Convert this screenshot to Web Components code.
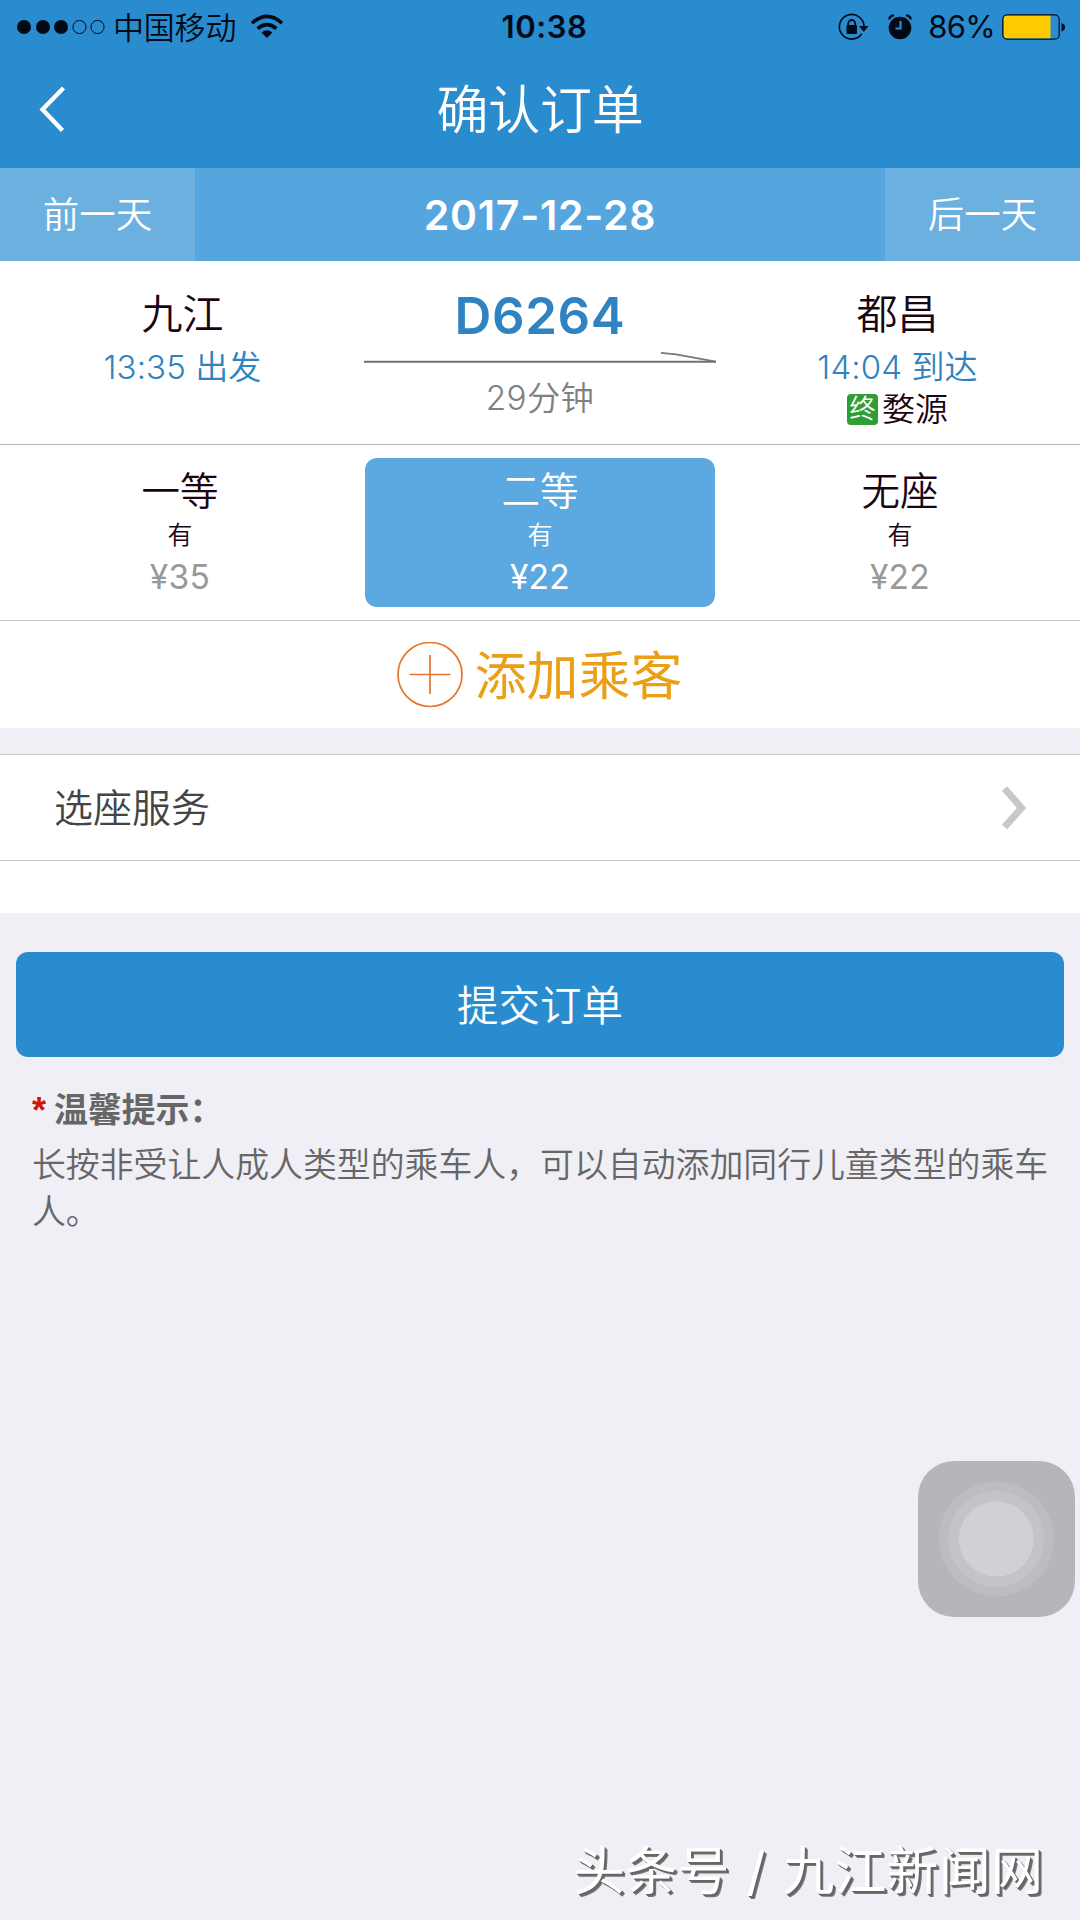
<!DOCTYPE html>
<html lang="zh-CN">
<head>
<meta charset="utf-8">
<title>确认订单</title>
<style>
html, body { margin: 0; padding: 0; }
body {
  width: 1080px; height: 1920px; overflow: hidden; background: #efeff5;
  font-family: Inter, "Noto Sans CJK SC", sans-serif; font-weight: 400;
}
</style>
</head>
<body>
<order-page></order-page>

<script>
const define = (name, html) => {
  const tpl = document.createElement('template');
  tpl.innerHTML = html;
  customElements.define(name, class extends HTMLElement {
    constructor() {
      super();
      this.attachShadow({ mode: 'open' }).append(tpl.content.cloneNode(true));
    }
  });
};

define('status-bar', `
<style>
:host { display: grid; grid-template-columns: 1fr auto 1fr; align-items: center; height: 53px; color: #020a18; }
.left, .right { display: flex; align-items: center; }
.left { padding-left: 17px; }
.right { justify-content: flex-end; padding-right: 15px; }
.dots { width: 90px; height: 16px; margin-right: 6px; }
.carrier { font-size: 31px; line-height: 53px; letter-spacing: -.2px; font-weight: 350; }
.wifi { width: 34px; height: 25px; margin-left: 14px; margin-top: -2px; }
.time { font-size: 31px; line-height: 54px; font-weight: 600; padding-left: 9px; letter-spacing: .6px; }
.lock { width: 32px; height: 30px; margin-right: 18px; }
.alarm { width: 26px; height: 28px; margin-right: 15px; margin-top: -2px; }
.pct { font-size: 31px; line-height: 54px; letter-spacing: -.7px; margin-right: 7px; }
.battery { width: 63px; height: 26px; }
svg { display: block; flex: none; }
</style>
<div class="left">
  <svg class="dots" viewBox="0 0 90 16"><g fill="currentColor"><circle cx="7" cy="8" r="7"/><circle cx="26" cy="8" r="7"/><circle cx="44" cy="8" r="7"/></g><g fill="none" stroke="currentColor"><circle cx="62.500" cy="8" r="6.600"/><circle cx="80.500" cy="8" r="6.600"/></g></svg>
  <span class="carrier">中国移动</span>
  <svg class="wifi" viewBox="0 0 34 25"><g fill="none" stroke="currentColor" stroke-width="3.600"><path d="M2 9.200Q17-4.600 32 9.200"/><path d="M7.600 14.600Q17 6.600 26.400 14.600"/></g><path d="M17 24l-5.500-5.600q5.500-4.200 11 0z" fill="currentColor"/></svg>
</div>
<span class="time">10:38</span>
<div class="right">
  <svg class="lock" viewBox="0 0 32 30"><path d="M24.800 21.800A12.300 12.300 0 1 1 27 15" fill="none" stroke="currentColor" stroke-width="1.600"/><path d="M22 14h9.500l-4.700 6z" fill="currentColor"/><rect x="9.500" y="13" width="10.500" height="9" rx="1" fill="currentColor"/><path d="M11.200 14v-2.500a3.500 3.500 0 0 1 7 0V14" fill="none" stroke="currentColor" stroke-width="1.800"/></svg>
  <svg class="alarm" viewBox="0 0 26 28"><circle cx="13" cy="16" r="11.300" fill="currentColor"/><path d="M2.200 7.500Q2.500 4 7 3.200M23.800 7.500Q23.500 4 19 3.200" fill="none" stroke="currentColor" stroke-width="2.200"/><path d="M13.500 9v7.500H8.500" fill="none" stroke="#298ccf" stroke-width="2.200"/></svg>
  <span class="pct">86%</span>
  <svg class="battery" viewBox="0 0 63 26"><rect x=".8" y=".8" width="56.400" height="24.400" rx="4.500" fill="none" stroke="currentColor" stroke-width="1.200"/><path d="M4.500 1.800H48.500V24.200H4.500Q1.800 24.200 1.800 21.500V4.500Q1.800 1.800 4.500 1.800z" fill="#fecb02"/><path d="M59.500 9q3.500 1 3.500 4.200t-3.500 4.200z" fill="currentColor"/></svg>
</div>`);

define('nav-bar', `
<style>
:host { display: grid; grid-template-columns: 120px 1fr 120px; align-items: center; height: 115px; color: #fff; }
svg { width: 28px; height: 48px; margin-left: 39px; margin-top: -4px; display: block; }
h1 { margin: 0; text-align: center; font-size: 52px; line-height: 115px; font-weight: 350; letter-spacing: -.2px; }
</style>
<svg viewBox="0 0 28 48"><path d="M24.500 3L3.500 24.500L23.500 45.500" fill="none" stroke="#fff" stroke-width="4.400"/></svg>
<h1><slot></slot></h1>`);

define('date-bar', `
<style>
:host { display: grid; grid-template-columns: 195px 1fr 195px; height: 93px; line-height: 94px; overflow: hidden; color: #fff; background: #55a5df; text-align: center; }
.day { background: #6bb0df; font-size: 36.500px; font-weight: 350; }
.date { font-size: 41px; font-weight: 600; letter-spacing: .7px; }
</style>
<div class="day"><slot name="prev"></slot></div>
<div class="date"><slot></slot></div>
<div class="day"><slot name="next"></slot></div>`);

define('trip-stop', `
<style>
:host { display: flex; flex-direction: column; align-items: center; padding-top: 26px; }
.city { font-size: 41px; line-height: 54px; color: #1c0512; font-weight: 350; }
.time { font-size: 33px; line-height: 42px; margin-top: 5px; color: #2f83c0; font-weight: 350; white-space: pre; letter-spacing: .1px; }
.end { display: flex; align-items: center; font-size: 33px; line-height: 42px; color: #1c0512; font-weight: 350; }
</style>
<div class="city"><slot name="city"></slot></div>
<div class="time"><slot></slot></div>
<div class="end"><slot name="end"></slot></div>`);

define('end-badge', `
<style>
:host { display: block; width: 31px; height: 31px; margin: 1px 4px 0 0; border-radius: 4px; background: #2f9e35; color: #fff; font-size: 26px; line-height: 30px; text-align: center; font-weight: 350; }
</style><slot></slot>`);

define('trip-summary', `
<style>
:host { display: grid; grid-template-columns: 365px 350px 365px; background: #fff; border-bottom: 1px solid #b4b4ba; box-sizing: border-box; height: 184px; }
.mid { display: flex; flex-direction: column; align-items: center; padding-top: 25px; }
.train { font-size: 51px; line-height: 60px; font-weight: 600; color: #2f83c0; letter-spacing: .6px; }
svg { width: 352px; height: 14px; margin-top: 3px; display: block; }
.dur { font-size: 33.300px; line-height: 42px; color: #808080; margin-top: 14px; font-weight: 350; letter-spacing: .4px; }
</style>
<slot name="from"></slot>
<div class="mid">
  <div class="train"><slot name="train"></slot></div>
  <svg viewBox="0 0 352 14"><path d="M0 12.700H352" stroke="#707070" stroke-width="2"/><path d="M297 3.800L312 5.400L352 12.700" stroke="#777" stroke-width="1.800" fill="none"/></svg>
  <div class="dur"><slot></slot></div>
</div>
<slot name="to"></slot>`);

define('seat-option', `
<style>
:host { display: flex; flex-direction: column; align-items: center; margin: 13px 5px 13px; height: 149px; border-radius: 12px; color: #1c0512; --price: #999; }
:host([selected]) { background: #5ba9e0; color: #fff; --price: #fff; }
.name { font-size: 38.500px; line-height: 50px; margin-top: 8px; font-weight: 350; }
.left { font-size: 25px; line-height: 32px; margin-top: 3px; font-weight: 350; }
.price { font-size: 33.500px; line-height: 40px; margin-top: 6px; color: var(--price); font-weight: 400; letter-spacing: .3px; }
</style>
<div class="name"><slot></slot></div>
<div class="left"><slot name="left"></slot></div>
<div class="price"><slot name="price"></slot></div>`);

define('seat-list', `
<style>:host { display: grid; grid-template-columns: repeat(3, 360px); height: 176px; box-sizing: border-box; background: #fff; border-bottom: 1px solid #c8c8cc; }</style>
<slot></slot>`);

define('add-passenger', `
<style>
:host { display: flex; align-items: center; justify-content: center; height: 107px; background: #fff; color: #eb9f16; font-size: 51.900px; }
svg { width: 66px; height: 66px; margin: 0 12px 0 -1px; }
span { line-height: 103px; padding-top: 4px; font-weight: 400; }
</style>
<svg viewBox="0 0 66 66" fill="none" stroke="#e8742c" stroke-width="1.700"><circle cx="33" cy="32.500" r="32"/><path d="M12.500 32.500H53.500M33 13V52"/></svg>
<span><slot></slot></span>`);

define('link-row', `
<style>
:host { display: flex; align-items: center; justify-content: space-between; box-sizing: border-box; height: 107px; margin-top: 26px; padding: 0 52px 0 54px; background: #fff; border: solid #c8c8c8; border-width: 1px 0; color: #444; font-size: 39px; font-weight: 350; }
span { line-height: 107px; height: 107px; }
svg { width: 28px; height: 44px; display: block; }
</style>
<span><slot></slot></span>
<svg viewBox="0 0 28 44"><path d="M4.500 2.500L21.500 22L4.500 41" fill="none" stroke="#c7c7cc" stroke-width="7"/></svg>`);

define('submit-button', `
<style>
:host { display: block; margin: 39px 16px 0; height: 105px; line-height: 108px; border-radius: 12px; background: #298ccf; color: #fff; font-size: 41.500px; text-align: center; font-weight: 350; }
</style><slot></slot>`);

define('tips-note', `
<style>
:host { display: block; padding: 30px 0 0 32px; color: #666; font-size: 33.880px; line-height: 47px; font-weight: 350; }
.head { display: flex; height: 46px; line-height: 46px; font-weight: 600; }
.star { width: 22px; color: #d0140c; font-size: 36px; line-height: 48px; font-weight: 700; font-family: "Liberation Sans", Arial, sans-serif; }
p { margin: 8px 0 0; width: 1020px; }
</style>
<div class="head"><span class="star">*</span><slot name="head"></slot></div>
<p><slot></slot></p>`);

define('assistive-touch', `
<style>:host { position: absolute; left: 918px; top: 1461px; width: 157px; height: 156px; } svg { display: block; }</style>
<svg width="157" height="156" viewBox="0 0 157 156"><rect width="157" height="156" rx="36" fill="#b6b5ba"/><circle cx="78.300" cy="78" r="57.500" fill="#bdbcc1"/><circle cx="78.300" cy="78" r="48" fill="#c4c3c8"/><circle cx="78.300" cy="78" r="37.500" fill="#d1d0d5"/></svg>`);

define('source-mark', `
<style>:host { position: absolute; left: 573px; top: 1842px; font-size: 52px; line-height: 60px; letter-spacing: .2px; word-spacing: 2px; color: #fff; text-shadow: 1px 1px #666, 2px 2px #666, 3px 3px #777; white-space: nowrap; }</style><slot></slot>`);

define('order-page', `
<style>
:host { display: block; position: relative; width: 1080px; height: 1920px; overflow: hidden; }
header { background: #298ccf; }
.rest { height: 52px; background: #fff; }
</style>
<header><status-bar></status-bar><nav-bar>确认订单</nav-bar></header>
<date-bar><span slot="prev">前一天</span>2017-12-28<span slot="next">后一天</span></date-bar>
<trip-summary>
  <trip-stop slot="from"><span slot="city">九江</span>13:35 出发</trip-stop>
  <span slot="train">D6264</span>29分钟<trip-stop slot="to"><span slot="city">都昌</span>14:04 到达<end-badge slot="end">终</end-badge><span slot="end">婺源</span></trip-stop>
</trip-summary>
<seat-list>
  <seat-option>一等<span slot="left">有</span><span slot="price">¥35</span></seat-option>
  <seat-option selected>二等<span slot="left">有</span><span slot="price">¥22</span></seat-option>
  <seat-option>无座<span slot="left">有</span><span slot="price">¥22</span></seat-option>
</seat-list>
<add-passenger>添加乘客</add-passenger>
<link-row>选座服务</link-row>
<div class="rest"></div>
<submit-button>提交订单</submit-button>
<tips-note><span slot="head">温馨提示：</span>长按非受让人成人类型的乘车人，可以自动添加同行儿童类型的乘车人。</tips-note>
<assistive-touch></assistive-touch>
<source-mark>头条号 / 九江新闻网</source-mark>`);
</script>
</body>
</html>
